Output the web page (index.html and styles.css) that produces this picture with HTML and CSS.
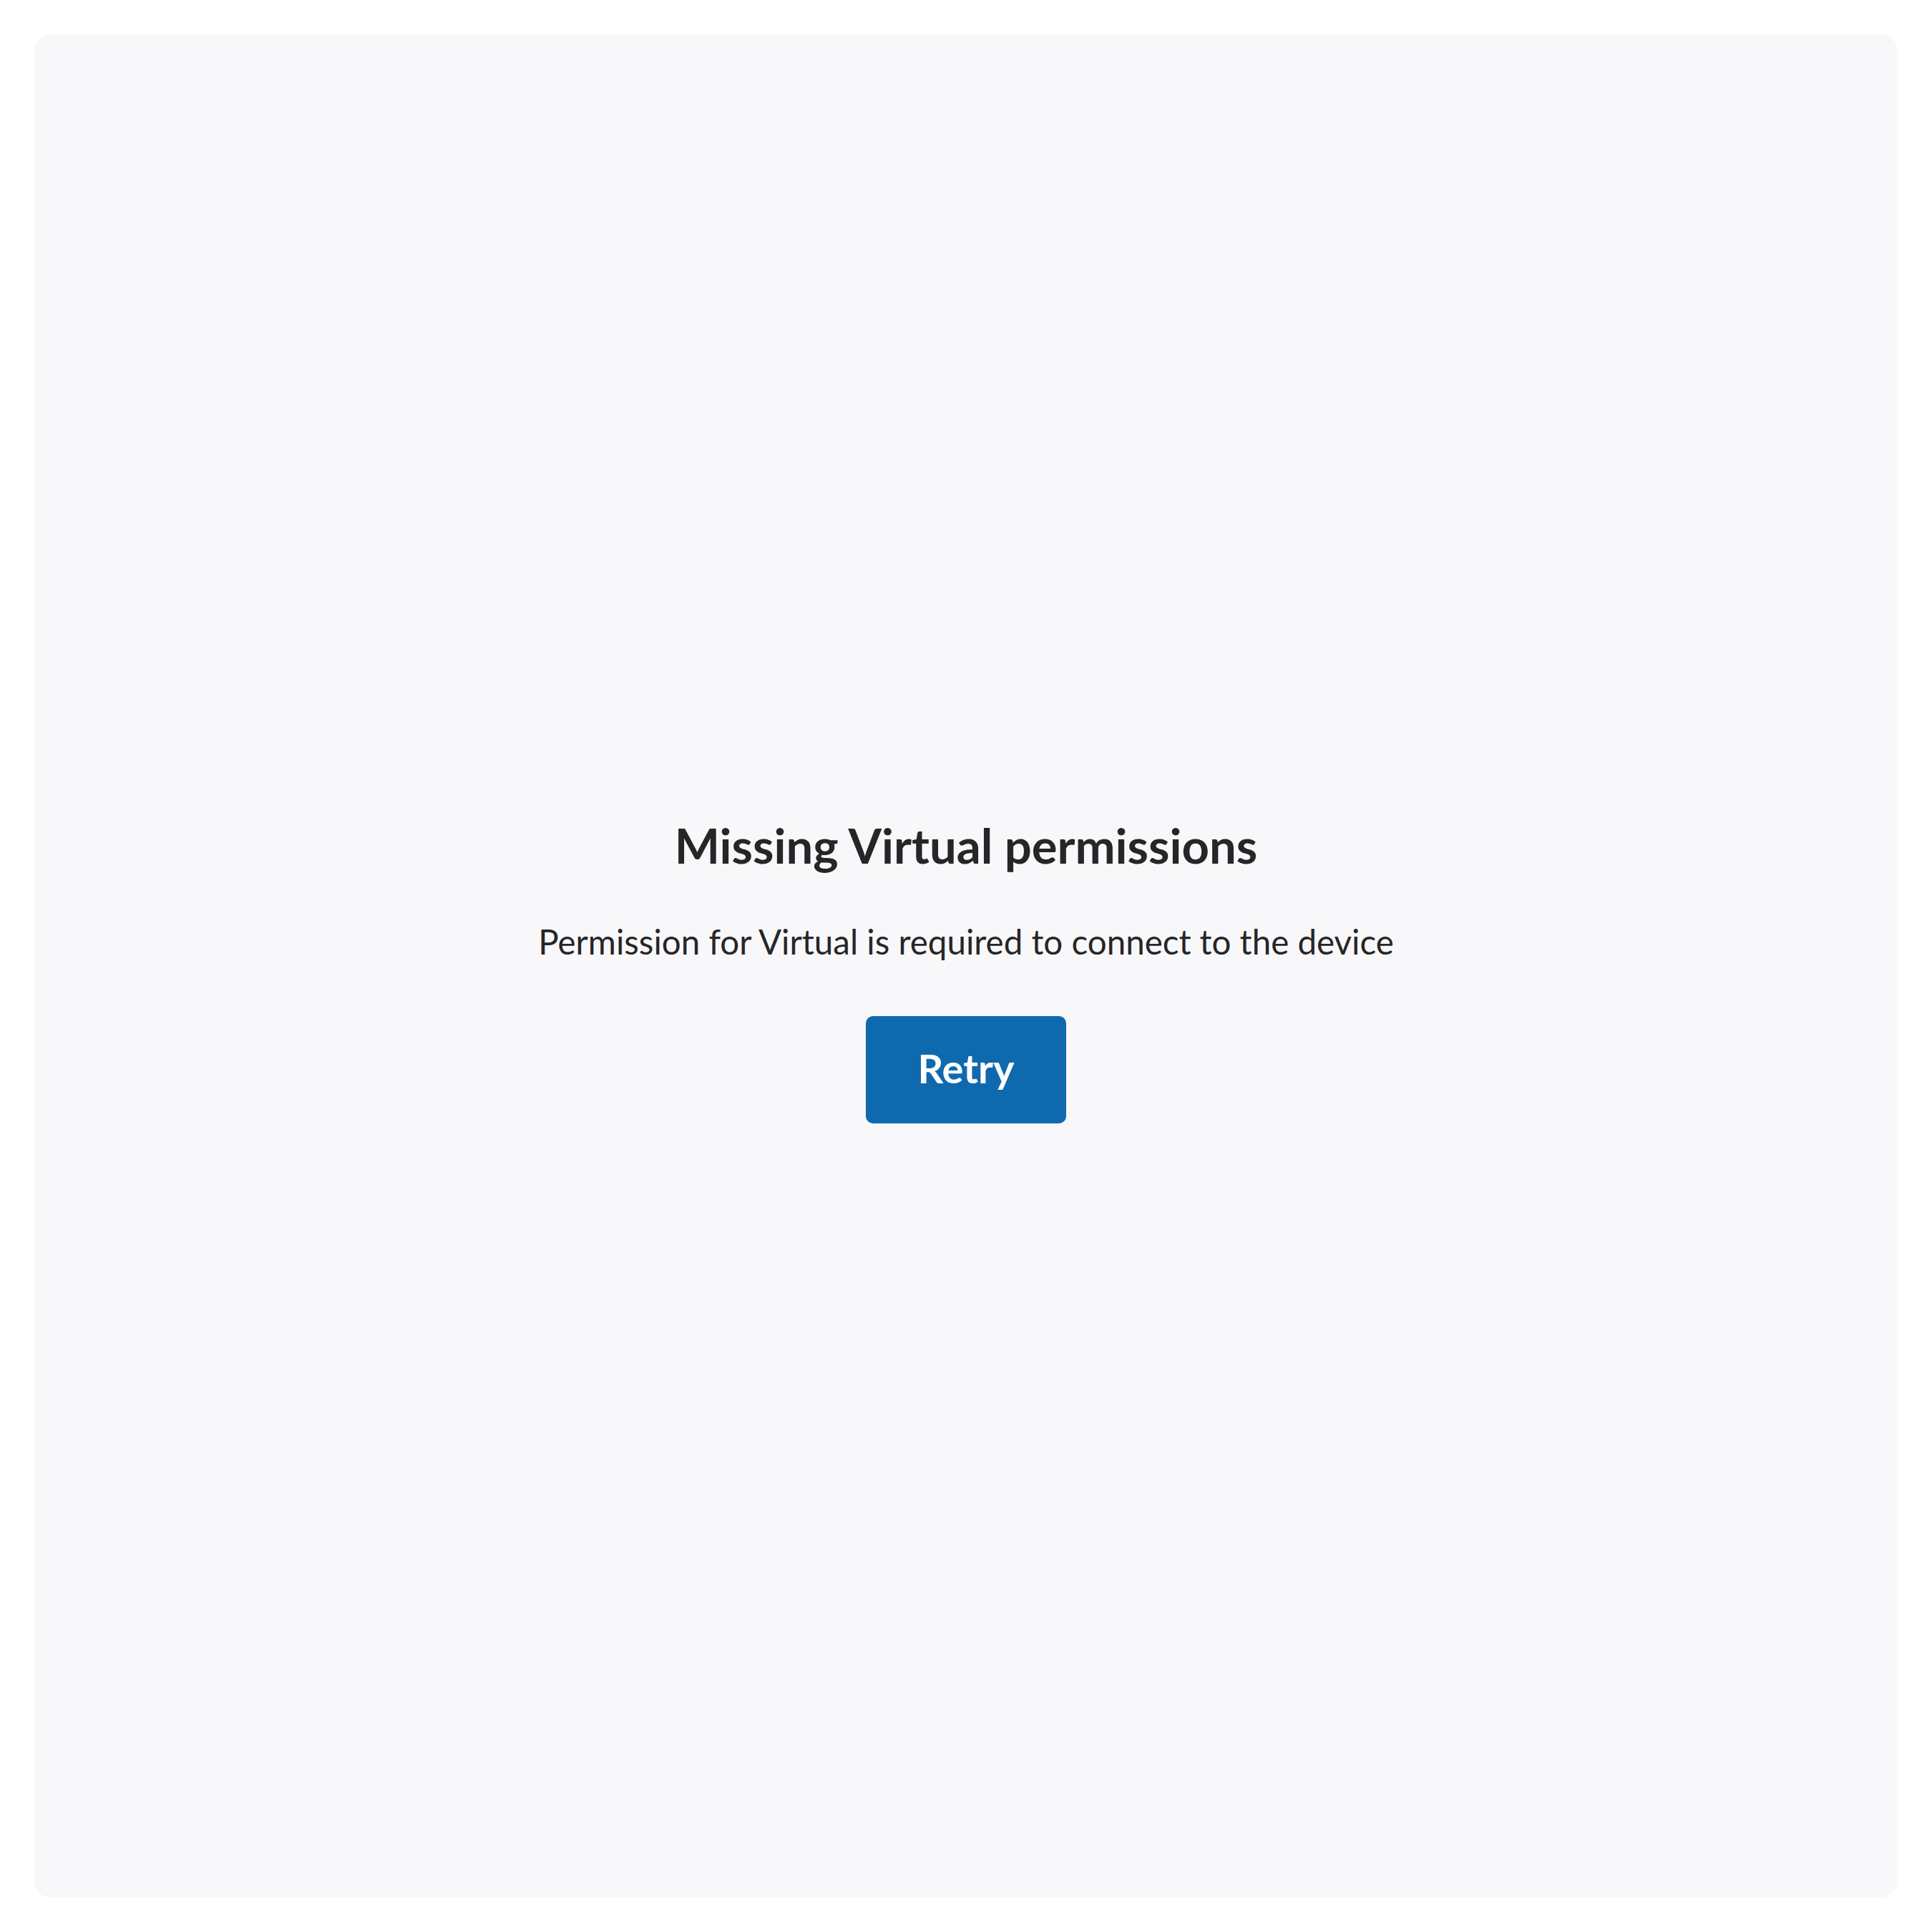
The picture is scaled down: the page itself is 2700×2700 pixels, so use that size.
FILE: index.html
```html
<!DOCTYPE html>
<html>
<head>
<meta charset="utf-8">
<link rel="stylesheet" href="styles.css">
</head>
<body>
<main class="card">
  <div class="content">
    <h1 class="title">Missing Virtual permissions</h1>
    <p class="message">Permission for Virtual is required to connect to the device</p>
    <button class="retry">Retry</button>
  </div>
</main>
</body>
</html>
```
FILE: styles.css
```css
html, body {
  margin: 0;
  padding: 0;
  background: #ffffff;
}
body {
  padding: 48px;
  font-family: Lato, "Noto Sans", sans-serif;
  color: #262628;
}
.card {
  width: 2604px;
  height: 2604px;
  background: #f8f8fa;
  border-radius: 24px;
  display: flex;
  align-items: center;
  justify-content: center;
}
.content {
  display: flex;
  flex-direction: column;
  align-items: center;
  margin-top: 11px;
}
.title {
  margin: 0;
  font-size: 67px;
  font-weight: 700;
  line-height: 80px;
}
.message {
  margin: 66px 0 0;
  font-size: 47.5px;
  line-height: 58px;
}
.retry {
  margin-top: 75px;
  width: 280px;
  height: 150px;
  padding: 0 0 5px;
  border: none;
  border-radius: 10px;
  background: #0f69af;
  color: #ffffff;
  font-family: Lato, "Noto Sans", sans-serif;
  font-size: 56px;
  font-weight: 700;
}
```
